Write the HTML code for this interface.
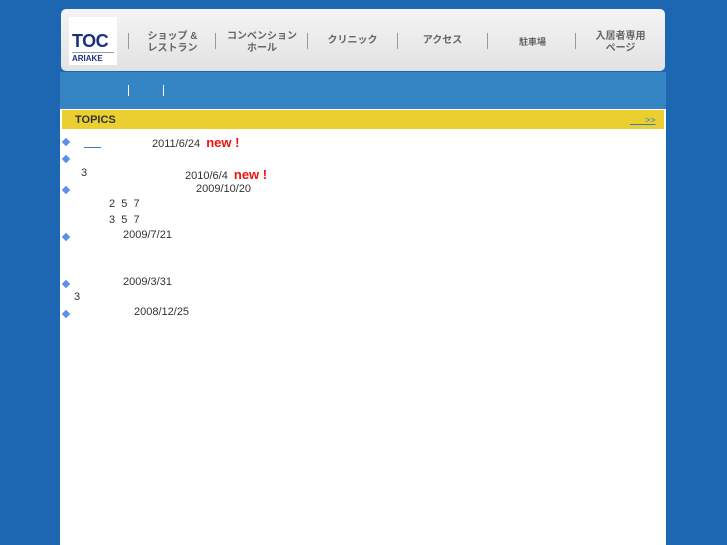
<!DOCTYPE html>
<html><head><meta charset="utf-8"><style>
body{margin:0;width:727px;height:545px;background:#1c66b2;position:relative;overflow:hidden;font-family:"Liberation Sans","Noto Sans CJK JP",sans-serif;}
.a{position:absolute}
#hdr{left:61px;top:9px;width:604px;height:62px;border-radius:5px;background:linear-gradient(#f4f4f4,#e2e2e2);}
#logo{left:69px;top:17px;width:48px;height:48px;background:#fff;}
.nav{position:absolute;top:31px;font-size:10px;color:#666;text-align:center;line-height:12px;font-weight:bold}
.sep{position:absolute;top:33px;width:1px;height:16px;background:#999}
#band{left:60px;top:72px;width:606px;height:37px;background:#3585c5}
#main{left:60px;top:109px;width:606px;height:436px;background:#fff}
#bar{left:62px;top:110px;width:602px;height:19px;background:#ebcf30}
.t{position:absolute;font-size:11px;color:#333;white-space:nowrap}
.d{position:absolute;left:63px;width:6px;height:6px;background:#5b8fe8;transform:rotate(45deg)}
.n{color:#f01010;font-weight:bold;font-size:13px}
</style></head><body>
<div id="hdr" class="a"></div>
<div id="logo" class="a"><div class="a" style="left:3px;top:14px;font-size:18px;font-weight:bold;color:#1a2f80;letter-spacing:-0.5px">TOC</div><div class="a" style="left:3px;top:35px;width:42px;height:1px;background:#99a"></div><div class="a" style="left:3px;top:37px;font-size:8px;font-weight:bold;color:#1a2f80">ARIAKE</div></div>
<div class="sep" style="left:128px"></div>
<div class="nav" style="left:140px;width:65px">ショップ &amp;<br>レストラン</div>
<div class="sep" style="left:215px"></div>
<div class="nav" style="left:222px;width:80px">コンベンション<br>ホール</div>
<div class="sep" style="left:307px"></div>
<div class="nav" style="left:315px;width:75px;top:35px">クリニック</div>
<div class="sep" style="left:397px"></div>
<div class="nav" style="left:405px;width:75px;top:35px">アクセス</div>
<div class="sep" style="left:487px"></div>
<div class="nav" style="left:495px;width:75px;top:36px;font-size:9px">駐車場</div>
<div class="sep" style="left:575px"></div>
<div class="nav" style="left:583px;width:75px;top:31px">入居者専用<br>ページ</div>
<div id="band" class="a"></div>
<div class="a" style="left:128px;top:85px;width:1px;height:11px;background:#fff"></div>
<div class="a" style="left:163px;top:85px;width:1px;height:11px;background:#fff"></div>
<div id="main" class="a"></div>
<div id="bar" class="a"></div>
<div class="t" style="left:75px;top:114px;font-weight:bold;color:#333">TOPICS</div>
<div class="t" style="left:630px;top:115px;color:#3a7ac0;font-size:9px;text-decoration:underline">&nbsp;&nbsp;&nbsp;&nbsp;&nbsp;&nbsp;&gt;&gt;</div>
<div class="d" style="top:139px"></div>
<div class="a" style="left:84px;top:147px;width:17px;height:1px;background:#3a7ac0"></div>
<div class="t" style="left:152px;top:135px">2011/6/24 <span class="n" style="margin-left:3px">new !</span></div>
<div class="d" style="top:156px"></div>
<div class="t" style="left:81px;top:167px">3</div>
<div class="t" style="left:185px;top:167px">2010/6/4 <span class="n" style="margin-left:3px">new !</span></div>
<div class="d" style="top:187px"></div>
<div class="t" style="left:196px;top:183px">2009/10/20</div>
<div class="t" style="left:109px;top:198px">2&nbsp; 5&nbsp; 7</div>
<div class="t" style="left:109px;top:214px">3&nbsp; 5&nbsp; 7</div>
<div class="d" style="top:234px"></div>
<div class="t" style="left:123px;top:229px">2009/7/21</div>
<div class="d" style="top:281px"></div>
<div class="t" style="left:123px;top:276px">2009/3/31</div>
<div class="t" style="left:74px;top:291px">3</div>
<div class="d" style="top:311px"></div>
<div class="t" style="left:134px;top:306px">2008/12/25</div>
</body></html>
